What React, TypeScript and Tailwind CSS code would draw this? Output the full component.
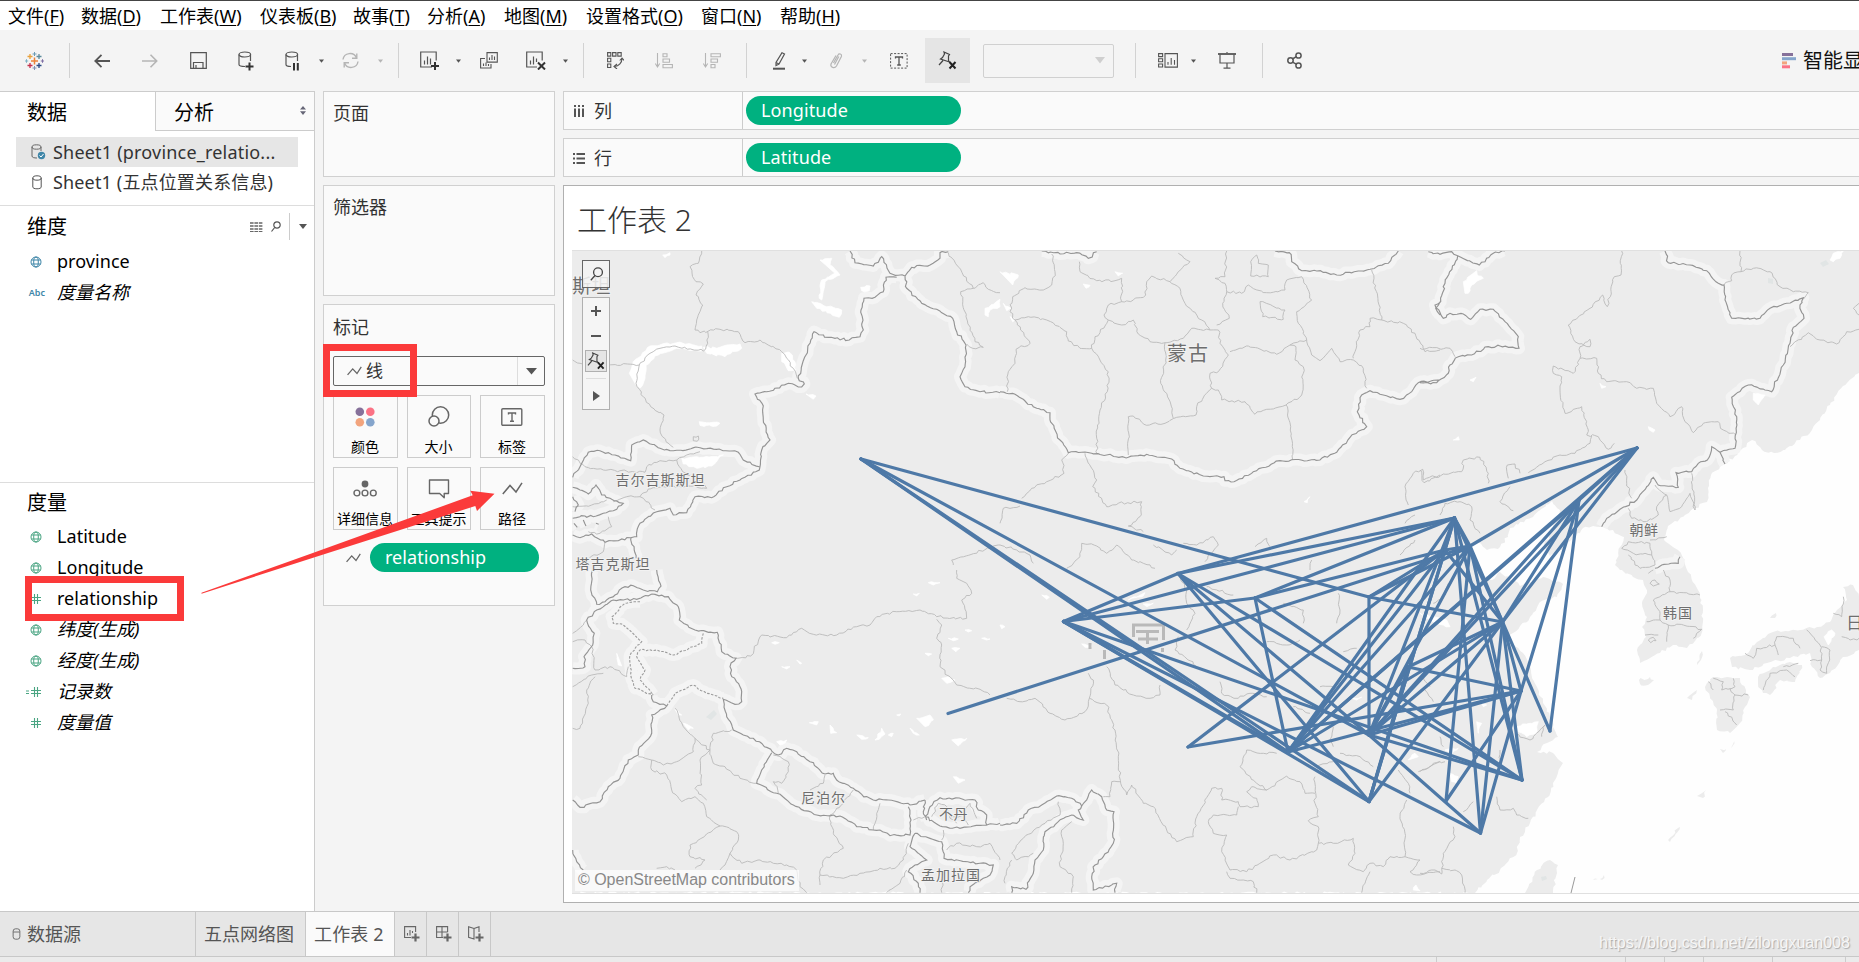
import React from 'react';

/* ---------- map geometry ---------- */

type Tile = { x: number; y: number; bold?: string[]; thin?: string[]; dash?: string[]; water?: string[]; land?: string[] };

const tiles: Tile[] = [
  {
    x: 560, y: 240,
    bold: [
      '870,33 885,68 940,78 965,50 990,100 1035,108 1055,82 1110,75 1140,55 1140,38 1165,35',
      '1010,112 978,112 970,155 945,172 912,175 903,210 910,270 900,290 868,300 805,292 762,275 738,345 715,415 733,432 725,441 685,430 620,455 585,462 606,490 610,540 630,600 605,630 598,690 540,720 500,740 455,773 405,770 380,818 340,825 330,805 290,815 240,850 230,890 213,893 228,955',
      '1035,108 1040,145 1085,190 1130,208 1178,235 1190,275 1218,315 1215,380 1200,410 1215,440 1260,455 1320,458',
      '38,712 60,680 85,637 120,632 165,645 212,662 215,615 250,600 300,625 340,632 420,623 470,628 535,637 550,660 598,680',
      '38,742 60,750 85,762 108,735 125,765 150,775 190,790 160,812 130,820 100,830 75,828 38,835',
      '38,770 55,795 45,815', '38,885 60,893 95,882 135,907 213,893', '42,850 52,862', '70,840 78,858', '108,850 116,853',
    ],
    thin: [
      '425,33 415,70 390,80 408,125 430,132 408,165 428,195 410,240 405,270 420,278 480,268 535,275 555,308 600,300 665,335 700,385 712,415',
      '38,360 60,370 238,375 270,340 300,325 345,318 430,333 443,310 443,275',
      '238,375 228,430 250,470 272,500 312,525 300,570 318,605 340,622',
      '38,650 75,680 130,690 180,692 255,697 260,680 300,662 350,660 380,645 420,635',
      '350,660 368,695 430,725 440,745 385,738 320,742 265,747 240,770 200,770 160,785',
      '240,770 285,810', '400,590 415,588 412,604 400,602 400,590',
      '1165,38 1190,75 1240,145 1270,128 1285,148 1320,158', '1240,145 1202,155 1218,230 1245,305 1270,322 1238,325 1220,312',
      '38,800 95,795 140,780', '1320,915 1175,960 1180,975', '135,907 130,935 75,960',
      '145,830 155,860 120,880 85,875',
    ],
    water: [
      '208,400 220,365 270,318 350,308 425,318 425,333 350,325 295,345 258,375 255,415 240,445 225,430',
      '430,322 470,325 500,315 540,312 545,325 495,350 440,340', '665,340 690,338 705,365 708,390 685,392 665,365',
      '365,655 430,652 490,645 455,678 410,685 370,672', '755,185 845,210 838,232 770,205', '780,60 815,55 810,75 840,105 795,125 785,180 778,175 785,120 825,100',
      '902,142 930,138 928,152 905,152', '738,462 768,468 760,478', '418,545 480,550 470,558 420,556', '1275,205 1320,178 1320,200 1290,210 1285,230 1275,225', '308,45 330,38 330,45 315,53',
    ],
  },
  {
    x: 1000, y: 240,
    bold: [
      '125,33 180,42 205,38 230,38 265,55 290,35',
      '0,455 45,463 100,500 150,518 150,540 180,600 205,638 255,636 320,645 385,652 440,643 515,657 540,685 610,708 672,710 675,722 702,725 760,695 840,662 960,660 1010,637 1050,592 1100,560 1072,515 1085,465 1110,452 1150,465 1200,478 1235,455 1255,428 1320,420',
      '825,33 868,38 875,65 905,92 950,93 1010,105 1075,93 1110,88 1165,70 1195,33', '1320,185 1307,205 1320,225',
    ],
    thin: [
      '155,42 165,95 155,135 130,150 75,143 38,170 30,215 45,240 85,230 140,240 200,275 205,303 240,325 275,325 285,290 300,278 325,240 365,255 400,240 415,282 450,305 495,308',
      '238,65 240,95 290,122 345,122 365,115 365,185 325,195 312,225 325,240', '365,185 400,180 437,165 440,125 455,108 510,125 535,95 570,65 535,40',
      '510,125 540,145 555,190 605,240 630,270 575,265 550,295 495,308 497,360 482,430 508,480 520,535',
      '45,240 90,310 48,328 45,370 25,395 22,455', '275,325 325,395 322,455 300,510 290,595 290,640',
      '385,645 385,530 400,528 432,553 495,550 530,532 588,525 590,500 635,445 630,400 655,395 685,345 660,310 655,270 630,270',
      '635,445 655,450 665,480 735,485 765,523 800,508 858,495 905,465 910,380 885,360 888,320 870,315 830,343 745,318 690,335',
      '858,495 872,560 878,660', '680,33 675,110 645,115 675,130 680,155 725,160 745,135 800,158 855,150 860,120 905,110 935,180 890,215 895,250 920,300 935,345 960,362 995,325 1020,365 1060,360 1090,385 1100,445',
      '680,155 668,190 688,235 650,255', '1115,90 1145,240 1110,235 1110,260 1080,270 1060,355', '1145,240 1210,250 1245,280 1275,335 1320,330',
      '780,185 855,210 850,238 788,230 780,185', '752,108 752,65 770,45 775,70 805,75 805,110 752,108', '870,315 920,300',
      '205,640 185,660 192,700 140,725 95,745 65,775', '255,640 290,720 278,740 320,800 355,790 425,785 420,830 385,858 430,875',
      '200,985 240,950 245,910 290,918 320,940 350,915 395,960 430,970 465,985', '550,910 590,915 640,890 655,915 615,965', '460,915 515,945 530,930',
      '0,915 50,930 90,945 100,970', '0,850 10,805 60,798', '1225,795 1215,740 1240,700 1268,688 1270,720 1320,705', '1215,850 1245,825', '1200,945 1245,900', '765,920 800,895 810,920', '930,990 935,960',
    ],
    water: ['0,95 55,105 38,135', '345,95 368,100 355,108', '250,132 270,136 258,145', '912,785 930,770 922,788', '10,190 32,205 20,212', '30,230 45,240 38,245'],
  },
  {
    x: 1420, y: 240,
    bold: [
      '25,35 60,43 95,35 113,47 178,75 220,40 255,33', '113,47 75,130 62,185 45,195 70,235 90,220 130,222 152,238 180,208 220,208 255,245 295,290 297,325 240,318 205,320 155,345 115,350 90,375 85,400 50,428 0,428',
      '735,33 745,68 810,75 860,92 895,130 912,135 915,180 935,235 1020,235 1050,205 1100,190 1150,173 1140,195 1152,235 1120,262 1110,310 1090,375 1055,455 985,435 935,472 950,530 945,625 900,637 875,620 862,660 835,670 815,695 768,698 775,742 715,735 700,712 680,740 650,780 600,808 560,835 545,860',
      '900,637 915,672', '705,985 725,975 775,970 780,950',
    ],
    thin: [
      '605,33 603,105 583,110 562,200 548,165 510,205 445,255 465,305 510,320 510,298 480,320 480,355 530,355 535,400 560,425 620,425 650,445 700,445 710,490 750,530 785,500 795,545 820,578 850,550 895,545 910,570 948,585',
      '480,355 460,400 400,378 400,400 425,410 420,450 435,520 485,500 505,570 500,585 535,590 565,628 583,610', '515,588 510,610 465,640 420,645 375,665 325,698',
      '960,33 963,95 935,105 935,122 912,135', '963,95 1000,85 1050,95 1080,140 1120,155 1165,158 1150,178', '1110,320 1165,278 1200,300 1250,312 1280,275 1317,268', '1317,190 1300,205 1317,225',
      '0,325 90,325 105,350', '0,690 12,728 70,702 125,695 130,660 180,652 205,700 205,730', '265,715 262,675 285,672 300,700', '270,740 240,785 280,812',
      '60,825 75,790 120,785 155,800 150,840 180,880', '615,690 620,730 635,775', '625,805 635,835 680,845 715,825 710,800 740,765 705,735', '740,765 750,815 785,800 810,760 825,810 815,700',
      '605,925 625,905 690,910 695,945 640,940 605,925', '625,945 660,985 705,975 695,945', '690,900 740,890',
    ],
    water: ['130,125 160,100 170,92 175,108 190,115 155,135 145,160 135,160', '150,420 168,412 160,425', '1000,460 1035,465 1015,495 1000,480', '685,560 705,570 700,577 688,570', '100,600 115,590 118,600', '1230,60 1240,40 1270,33 1260,55 1240,65', '540,430 558,440 545,445'],
  },
  {
    x: 560, y: 570,
    bold: [
      '98,0 92,60 110,103 135,95 165,75 195,50 220,47 250,60 292,65 303,48 290,0',
      '275,72 325,80 355,110 358,150 405,180 472,187 485,245 528,265 510,290 515,320 540,350 545,395 525,403 490,388 500,440 520,480 550,495 580,505 655,555 680,535 710,545 750,575 795,612 820,610 830,630 880,655 905,673 940,690 985,690 1050,705 1095,690',
      '275,72 230,88 160,90 110,120 80,150 103,190 98,225 72,260 75,290 38,295',
      '275,375 280,395 320,408 275,435 275,490 235,540 235,555 205,570 180,625 145,650 120,695 60,712 38,690',
      '635,548 605,600 590,640 650,670 700,705 770,735 840,738 890,770 960,780 990,797 1050,795 1053,750 1045,710',
      '1095,690 1090,725 1100,750', '1095,740 1110,710 1140,683 1245,690 1255,720 1280,735 1280,765 1320,760', '1095,740 1140,768 1200,775 1280,765',
      '38,840 50,875 70,900', '1065,790 1090,800 1145,815 1152,865 1260,880 1300,885 1290,915 1230,950 1225,968', '1065,790 1050,830 1100,870 1065,885 1045,905 1075,940 1080,968',
    ],
    dash: ['240,95 195,100 155,140 160,160 185,162 245,215 210,255 213,320 225,355 280,375', '430,190 425,220 400,230 340,255 290,240 240,240 230,260 255,300 240,330 280,375', '320,408 345,370 400,345 440,370 490,385'],
    thin: [
      '528,265 572,258 605,195 680,203 725,175 760,193 830,195 890,170 930,165 950,140 1010,125 1080,120 1130,140 1220,145 1205,90 1235,70 1220,40 1190,25 1190,0',
      '1130,148 1145,165 1130,205 1145,225 1140,290 1190,345 1260,358 1290,375', '38,190 70,165 80,150', '38,215 75,210 95,230 105,300 150,290 200,320 205,290', '38,350 95,315 130,310', '105,320 80,360 85,400 60,475 38,475',
      '345,415 370,470 405,505 400,545 350,575 310,585 275,570 235,560', '405,505 450,540 460,490 515,480', '275,570 275,600 320,615 335,660 365,695 405,680 430,700 440,740 480,768 530,785 535,810 510,850 495,885 480,900',
      '450,540 420,570 425,645 405,655 440,690', '450,540 460,580 495,590 540,625 590,640', '480,768 390,825 390,860 435,870 405,895', '640,555 685,575 685,605 665,640 640,635 655,670', '795,615 790,640 750,660', '880,660 850,700 810,735 820,790 850,835 790,870 780,915 780,945',
      '960,700 945,760 940,780', '510,850 545,880 600,870 640,880 680,885 710,900 720,950 740,968', '780,915 850,925 900,910 960,895 1005,895 1030,870 1045,820', '290,895 320,890 345,900', '1160,840 1190,820 1250,830 1290,820 1320,870', '1115,740 1135,700 1160,710 1170,745 1190,760', '1170,745 1210,735 1225,765', '1210,735 1230,700 1250,745', '1060,750 1095,740', '980,968 1020,940 1040,900', '1150,780 1145,810', '1150,900 1145,968',
    ],
    water: ['748,458 775,455 770,465', '810,465 830,488 812,490', '890,495 925,503 905,508', '945,510 965,475 975,492 958,508', '1070,445 1110,435 1120,450 1095,470', '1050,475 1078,495 1060,490', '1175,510 1220,505 1195,528', '650,515 680,510 660,525', '1105,38 1140,38 1120,45', '1060,72 1078,70 1070,78', '635,218 658,218 645,223', '665,290 690,290 680,297', '710,270 725,280 720,282', '1175,235 1200,235 1188,245', '1215,180 1235,182 1225,186', '1145,325 1165,320 1185,330 1160,340', '1180,620 1215,630 1195,640', '170,250 175,285 185,288', '370,460 400,475 385,480', '345,418 365,435 355,435', '1165,205 1195,207 1180,212', '985,495 1000,490 995,500', '1095,250 1115,252 1105,257', '1010,435 1022,432 1018,438', '1265,205 1290,207 1280,210'],
  },
  {
    x: 1000, y: 570,
    bold: [
      '0,765 50,760 85,720 125,705 170,678 215,685 245,708 260,690 275,660 305,680 320,720 342,725 340,820 310,860 285,885 275,920 280,960 350,940 345,968',
      '245,708 235,720 250,750 215,735 175,755 135,785 130,840 105,870 100,910 78,958 35,950 35,968',
    ],
    thin: [
      '320,290 345,345 400,375 450,385 480,375 480,345', '265,310 280,330 268,385 320,405 345,480 355,560 362,640 380,675 395,645 430,700 460,710 500,780 530,815 580,800 590,740 635,655 665,655 665,690 715,695 720,710 775,710 770,685 740,665 755,650 800,660 860,618 900,635 915,670 945,670',
      '20,385 60,395 105,385 150,430 195,450 255,425 268,385', '360,635 335,635 330,680 310,680', '740,540 720,590 770,640 800,660', '740,540 790,550 830,550', '715,710 710,735 640,735 625,755 640,790 680,795 665,845 690,900 740,905 820,855 870,870 950,840 955,820 1000,820 1060,805 1065,850 1045,885 1090,905 1110,880 1150,890 1170,860 1215,860 1260,870 1230,905 1250,915 1320,905',
      '680,905 690,925 760,935 770,968', '945,620 945,700 955,740 925,752 955,770 955,820', '1110,905 1085,968', '1220,690 1200,740 1215,790 1215,860', '540,20 560,60 560,100 585,130 560,180', '535,200 525,240 590,290', '660,335 665,370 715,385 750,370 800,380', '1015,70 1020,120 1010,160', '1020,550 1080,560 1120,590', '880,410 930,430', '1030,245 1070,235', '960,350 1000,350 1005,370', '620,50 700,75', '850,100 910,120 910,160', '800,215 860,225 900,210', '215,755 185,780 190,820 180,890 220,920 215,968', '175,695 180,735 135,760 70,805 35,850 50,870 100,850', '35,870 15,920 15,940', '1000,470 990,510 1000,530', '950,590 1000,575', '1195,600 1225,640 1230,670', '1270,320 1290,350', '1255,605 1320,575',
    ],
    water: ['125,75 148,82 140,88', '385,90 435,68 430,78 395,85', '430,102 460,100 440,110', '245,222 275,228 255,232', '0,165 15,170 5,176', '1225,570 1245,550 1255,560', '1240,960 1248,945 1260,962', '1055,385 1085,382 1070,390'],
  },
  {
    x: 1420, y: 570,
    thin: [
      '0,910 45,900 65,912 65,895 105,900 125,915 135,968', '65,895 70,850 105,800 100,770', '230,680 240,720 280,715 290,735 325,745', '130,725 160,695', '0,605 40,580 75,575', '285,490 330,510 375,465 365,500', '60,500 70,530', '15,360 40,395', '240,540 240,580', '40,100 70,80 85,40',
      '730,0 750,30 750,65 840,75', '750,65 700,90 720,130 720,150 680,155', '720,150 745,165 740,215', '745,165 790,165 845,178 820,205', '675,195 715,195', '975,250 1000,265 1010,235 1065,225 1075,255', '1065,225 1070,200 1120,205 1140,235', '1160,180 1200,225 1205,270 1170,272', '1205,230 1230,240 1220,310 1200,300 1205,270', '1270,80 1265,140 1240,130', '1030,360 1050,310 1100,300 1125,320', '1090,290 1135,280', '865,335 880,360', '880,325 910,335 905,360 945,350 940,325', '930,355 945,375 985,375', '945,375 940,420 900,420', '915,425 950,465',
      '1265,200 1290,210 1317,205', '685,10 700,0', '690,40 705,30 718,42 700,48 690,40', '685,210 700,202 708,212 692,218 685,210',
    ],
    water: ['0,130 40,140 80,150 90,170 70,165 30,150', '290,470 330,460 355,455 350,490 320,500 295,485', '90,610 115,620 110,640 95,635', '170,455 185,460 175,490', '75,540 115,535 95,550', '185,400 200,405 190,410', '1212,200 1235,180 1245,190 1225,225'],
  },
];

const landShapes: string[] = [
  // mainland with the Korean peninsula
  '572,250 1859,250 1859,373 1843,386 1830,405 1820,420 1812,430 1800,440 1785,450 1774,453 1762,450 1752,440 1743,448 1735,456 1725,464 1711,475 1708,488 1707,502 1695,508 1685,515 1668,526 1664,540 1678,550 1684,560 1688,572 1698,590 1703,610 1702,632 1695,641 1687,648 1673,645 1660,653 1650,658 1640,663 1637,650 1646,637 1642,627 1647,617 1642,603 1647,593 1643,580 1633,577 1620,570 1615,565 1620,547 1624,537 1613,530 1600,527 1583,528 1575,536 1562,550 1550,556 1544,548 1552,530 1560,510 1552,501 1533,517 1510,528 1508,537 1500,547 1487,550 1478,542 1470,545 1475,560 1480,575 1492,580 1500,572 1520,586 1543,577 1563,584 1557,597 1540,602 1530,617 1513,633 1508,637 1523,653 1537,687 1543,703 1550,717 1553,727 1558,737 1547,743 1537,752 1553,753 1563,763 1558,773 1553,783 1548,797 1537,810 1530,823 1520,837 1517,853 1500,870 1487,880 1475,893 572,893',
  // Kyushu, Shikoku, Honshu, Taiwan
  '1707,683 1713,677 1727,677 1740,678 1742,685 1750,697 1745,707 1740,723 1730,733 1717,730 1717,710 1710,697 1705,687',
  '1758,677 1773,667 1790,662 1802,665 1795,682 1780,680 1770,695 1763,693 1758,683',
  '1730,658 1745,655 1757,642 1773,632 1800,630 1817,627 1830,622 1837,610 1847,600 1843,587 1853,585 1859,597 1859,650 1843,657 1830,673 1820,678 1812,667 1810,653 1790,658 1767,663 1750,670 1732,667',
  '1525,893 1537,870 1550,860 1558,865 1553,893',
  '1639,680 1650,677 1654,680 1648,685 1640,684', '1697,665 1702,651 1701,660', '1687,698 1697,690 1692,700', '1697,796 1706,790 1703,798', '1668,840 1680,827 1670,842', '1720,749 1726,749 1723,753', '1731,748 1734,740 1732,747', '1770,618 1776,613 1775,618', '1593,880 1598,879', '1600,879 1604,875 1602,880',
];

const rand = (n: number) => {
  const s = Math.sin(n * 127.1) * 43758.5453;
  return s - Math.floor(s) - 0.5;
};

function rough(points: string, ox: number, oy: number, k: number, amp: number, close = false): string {
  const p = points.split(' ').map((s) => {
    const [a, b] = s.split(',').map(Number);
    return [ox + a * k, oy + b * k];
  });
  let d = `M${p[0][0].toFixed(1)} ${p[0][1].toFixed(1)}`;
  for (let i = 1; i < p.length; i++) {
    const [x0, y0] = p[i - 1];
    const [x1, y1] = p[i];
    const len = Math.hypot(x1 - x0, y1 - y0);
    const n = Math.max(1, Math.round(len / 3.2));
    const border = (x0 < 573 && x1 < 573) || (x0 > 1858 && x1 > 1858) || (y0 < 251 && y1 < 251);
    for (let j = 1; j <= n; j++) {
      const t = j / n;
      const a = j === n || border ? 0 : amp;
      const x = x0 + (x1 - x0) * t + rand(x0 + j * 3.7 + y1) * a;
      const y = y0 + (y1 - y0) * t + rand(y0 + j * 5.3 + x1) * a;
      d += `L${x.toFixed(1)} ${y.toFixed(1)}`;
    }
  }
  return close ? d + 'Z' : d;
}

const layer = (key: 'bold' | 'thin' | 'dash' | 'water', amp: number, close = false) =>
  tiles.flatMap((t) => (t[key] ?? []).map((s) => rough(s, t.x, t.y, 1 / 3, amp, close))).join('');

const landPath = landShapes.map((s) => rough(s, 0, 0, 1, 3, true)).join('');
const boldPath = layer('bold', 2.2);
const thinPath = layer('thin', 2.4);
const dashPath = layer('dash', 1.5);
const waterPath = layer('water', 2.2, true);

const cities: Record<string, [number, number]> = {
  A: [861, 459], B: [1063.5, 621.5], C: [948, 713.5], D: [1188, 747], E: [1178, 573.5], F: [1255, 598], G: [1288, 752],
  H: [1369, 597], I: [1369, 735], J: [1369, 801.5], K: [1454.5, 518], L: [1445, 550], M: [1470, 546], N: [1637, 448],
  O: [1579, 500], P: [1502.5, 622], Q: [1521, 691], R: [1550, 731], S: [1522, 780], T: [1446, 801], U: [1480.5, 833], V: [1408, 667],
};

const links =
  'AH HP AI AG AJ BE BF BK BG BJ BU BS CM DQ DL EN EK EJ EI ES FK FL FG FS HI HL HM GK GL GM GO GN GP GQ IV IO IN IQ IP IK IM IU IS JV JL JP JK NM NO OP NP OQ OR PQ PR PS PU PV VQ QT QU KU KS MT MS MP KP KL KM LM LP'.split(' ');

const mapLabels: [string, number, number, number, number][] = [
  ['斯坦', 572, 293, 19, 0.5],
  ['吉尔吉斯斯坦', 615.5, 485, 14, 1],
  ['塔吉克斯坦', 575.5, 569, 14, 1],
  ['蒙古', 1167, 360.5, 20, 1],
  ['朝鲜', 1629.5, 534.5, 14, 0.5],
  ['韩国', 1663, 618, 14, 1],
  ['日本', 1846, 629, 17, 1],
  ['尼泊尔', 801, 803, 14, 1],
  ['不丹', 939, 819, 14, 0.5],
  ['孟加拉国', 921, 880, 14, 1],
];

function MapView() {
  return (
    <svg viewBox="572 251 1287 642" className="block h-full w-full">
      <rect x="572" y="251" width="1287" height="642" fill="#fefefe" />
      <path d={landPath} fill="#ececec" />
      <path d={boldPath + dashPath} fill="none" stroke="#f4f4f4" strokeWidth="12" strokeLinejoin="round" />
      <path d={waterPath} fill="#fff" stroke="#fff" strokeWidth="0.8" />
      <path d={thinPath} fill="none" stroke="#bababa" strokeWidth="0.9" />
      <path d={dashPath} fill="none" stroke="#9b9b9b" strokeWidth="1.1" strokeDasharray="2.5 1.5" />
      <path d={boldPath} fill="none" stroke="#949494" strokeWidth="1.15" />
      <path d="M1575 877l-4 16" stroke="#999" fill="none" />
      <g fill="#e1e5e5">
        <path d="M706 717l8-7 3 4-6 6zM1820 263l6-3 3 4-6 3zM1768 278l5 1 0 5-5-1zM1541 877l5-1 1 3-5 2z" />
      </g>
      <g fill="none" stroke="#b9b9b9" strokeWidth="3">
        <path d="M1133.500 637v-12h30v15M1136 631.500h23M1138 639h20M1147.500 632v12M1090 643v6M1104.500 650v9M1162.500 648v4" />
      </g>
      {mapLabels.map(([t, x, y, s, ls]) => (
        <text key={t} x={x} y={y} fontSize={s} letterSpacing={ls} fill="#6e6e6e" stroke="#f2f2f2" strokeWidth="2" paintOrder="stroke" fontFamily="'Noto Sans CJK SC', sans-serif">
          {t}
        </text>
      ))}
      <g stroke="#4e79a7" strokeWidth="3.2" strokeLinecap="round">
        {links.map((l) => {
          const [a, b] = [cities[l[0]], cities[l[1]]];
          return <line key={l} x1={a[0]} y1={a[1]} x2={b[0]} y2={b[1]} />;
        })}
      </g>
    </svg>
  );
}

/* ---------- icons ---------- */

type SvgProps = { w: number; h: number; c?: string; sw?: number; children: React.ReactNode; className?: string };
const Svg = ({ w, h, c = '#555', sw = 1.2, children, className = '' }: SvgProps) => (
  <svg width={w} height={h} viewBox={`0 0 ${w} ${h}`} fill="none" stroke={c} strokeWidth={sw} className={`block shrink-0 ${className}`}>
    {children}
  </svg>
);

const Caret = ({ light = false }: { light?: boolean }) => (
  <Svg w={5} h={4} c="none"><path d="M0 .5h5L2.500 3.800z" fill={light ? '#b5b5b5' : '#555'} /></Svg>
);
const Globe = ({ c }: { c: string }) => (
  <Svg w={12} h={12} c={c} sw={1}><circle cx="6" cy="6" r="5" /><ellipse cx="6" cy="6" rx="2.300" ry="5" /><path d="M1.500 4h9M1.500 8h9" /></Svg>
);
const Hash = () => (
  <Svg w={12} h={12} c="#4aa583" sw={1.1}><path d="M1 4.500h10M1 7.500h10M4.500 1v10M7.500 1v10" /></Svg>
);
const Cylinder = ({ c = '#555' }: { c?: string }) => (
  <Svg w={10} h={15} c={c} sw={1}><path d="M.8 3v9c0 1 1.500 1.800 4.200 1.800s4.200-.8 4.200-1.800V3" /><ellipse cx="5" cy="3" rx="4.200" ry="2.200" /></Svg>
);
const Pin = ({ s = 19 }: { s?: number }) => (
  <svg width={s} height={s} viewBox="0 0 19 19" fill="none" stroke="#444" strokeWidth="1.200" className="block">
    <path d="M6 1l5.500 2.500-1 1.500 0 4.500 1 1.500-9-3 2-1.500L6.500 3zM5 9.500L1 14" />
    <path d="M11.500 11l6 6.500M17.500 11l-6 6.500" stroke="#222" strokeWidth="2" />
  </svg>
);
const LineMark = ({ big = false }: { big?: boolean }) => (
  <svg width={big ? 21 : 15} height={big ? 13 : 10} viewBox="0 0 21 13" fill="none" stroke="#666" strokeWidth={big ? 1.5 : 1.8} className="block shrink-0">
    <path d="M.8 12L8 3.500l6 6.500L20 .8" />
  </svg>
);
const Sep = ({ className }: { className: string }) => <div className={`h-[35px] w-px shrink-0 bg-[#d2d2d2] ${className}`} />;

/* ---------- toolbar ---------- */

function Toolbar() {
  return (
    <div className="flex h-[61px] shrink-0 items-center overflow-hidden bg-[#f4f4f4]">
      <Svg w={19} h={18} sw={1.3} className="ml-[25px]">
        <path d="M9.500 5.500v7M6 9h7" stroke="#eb8339" strokeWidth="1.500" />
        <path d="M9.500 0v4M7.500 2h4" stroke="#6a9bb5" strokeWidth="1" />
        <path d="M9.500 14v4M7.500 16h4" stroke="#7f91b4" strokeWidth="1" />
        <path d="M5 2v5M2.500 4.500h5" stroke="#e8a13c" /><path d="M14 2v5M11.500 4.500h5" stroke="#5b8a9c" />
        <path d="M5 11v5M2.500 13.500h5" stroke="#c4304c" /><path d="M14 11v5M11.500 13.500h5" stroke="#2b4b85" />
        <path d="M1.500 7.200v3.600M0 9h3.200" stroke="#7fb2c5" strokeWidth="1" /><path d="M17.500 7.200v3.600M15.800 9h3.200" stroke="#7f6fa5" strokeWidth="1" />
      </Svg>
      <Sep className="ml-[25px]" />
      <Svg w={16} h={14} sw={1.8} className="ml-[24px]"><path d="M16 7H1.500M7.500 .8L1.300 7l6.200 6.200" /></Svg>
      <Svg w={16} h={14} sw={1.6} c="#b5b5b5" className="ml-[32px]"><path d="M0 7h14.500M8.500 .8L14.700 7l-6.200 6.200" /></Svg>
      <Svg w={17} h={17} className="ml-[32px]"><path d="M.7 .7h15.600v15.600H.7zM3.500 16v-5.500h9.500V16M6 16v-3" /></Svg>
      <Svg w={16} h={20} className="ml-[31px]"><path d="M7 15.500C3 15.500 1 14.800 1 13.500V3.500M12.500 3.500V10" /><ellipse cx="6.800" cy="3.500" rx="5.800" ry="2.500" /><path d="M11.500 11.500v8M7.500 15.500h8" stroke="#333" strokeWidth="2" /></Svg>
      <Svg w={16} h={20} className="ml-[31px]"><path d="M6 15.500C3 15.500 1 14.800 1 13.500V3.500M12.500 3.500V10" /><ellipse cx="6.800" cy="3.500" rx="5.800" ry="2.500" /><path d="M9 12v7.500M12.800 12v7.500" stroke="#333" strokeWidth="2" /></Svg>
      <div className="ml-[18px]"><Caret /></div>
      <Svg w={19} h={17} c="#b5b5b5" sw={1.4} className="ml-[17px]"><path d="M2 7.500A7 6.800 0 0 1 15.500 6M17 9.500A7 6.800 0 0 1 3.500 11M15.800 1.500V6.300H11M3.200 15.500v-4.800H8" /></Svg>
      <div className="ml-[18px]"><Caret light /></div>
      <Sep className="ml-[15px]" />
      <Svg w={20} h={19} className="ml-[21px]"><path d="M12 16H.7V1h15.500v8.500M4.500 13.500V9.500M7.500 13.500V5.500M10.500 13.500V7.500" /><path d="M15 11v8M11 15h8" stroke="#333" strokeWidth="2" /></Svg>
      <div className="ml-[16px]"><Caret /></div>
      <Svg w={18} h={17} sw={1.1} className="ml-[19px]"><path d="M7 .6h10.300v9.500H7zM9.500 8V5.500M12 8V3M14.500 8V4.500M5 6.500H.6v9.500H11v-4M3.500 14v-2.500M6 14v-3.500M8.500 14v-2" /></Svg>
      <Svg w={20} h={19} className="ml-[28px]"><path d="M11 16H.7V1h15.500v8.500M4.500 13.500V9.500M7.500 13.500V5.500M10.500 11V7.500" /><path d="M12 11.500l7 7M19 11.500l-7 7" stroke="#333" strokeWidth="2" /></Svg>
      <div className="ml-[17px]"><Caret /></div>
      <Sep className="ml-[15px]" />
      <Svg w={17} h={17} sw={1.1} className="ml-[23px]"><path d="M.6 .6h3.200v3.500H.6zM5.600 .6h3.400v3.500H5.600zM10.800 .6h3.400v3.500h-3.400zM.6 6.300h3.200v3.500H.6zM.6 12h3.200v3.500H.6zM15 6.500c0 4-3 7.500-7.500 8M12.800 8.500L15 6l2 2.500M10 12l-3 2.500 3 2.500" /></Svg>
      <Svg w={18} h={16} c="#b5b5b5" sw={1.1} className="ml-[31px]"><path d="M2.500 0v13M.3 10.500L2.500 14l2.200-3.500M8 .8h4v3H8zM8 6h6.500v3.200H8zM8 11.500h9.400v3.300H8z" /></Svg>
      <Svg w={18} h={16} c="#b5b5b5" sw={1.1} className="ml-[30px]"><path d="M2.500 0v13M.3 10.500L2.500 14l2.200-3.500M8 .8h9.400v3H8zM8 6h6.500v3.200H8zM8 11.500h4v3.300H8z" /></Svg>
      <Sep className="ml-[25px]" />
      <Svg w={14} h={18} className="ml-[25px]"><path d="M10 .7l2.500 1.300-5.500 10-3 1.500 0-3zM4 10.500l3 1.500" /><path d="M1 16.700h12" strokeWidth="2" /></Svg>
      <div className="ml-[16px]"><Caret /></div>
      <Svg w={14} h={17} c="#b5b5b5" className="ml-[22px]"><path d="M4.500 11l4.500-8c1-2 4-1 3.500 1.200L7.500 14c-2 3-6.500 1.500-5.500-2L7 3.500M9.800 4.500L5.500 12.500" /></Svg>
      <div className="ml-[19px]"><Caret light /></div>
      <Svg w={18} h={16} sw={1} className="ml-[23px]"><path d="M.6 .6h16.500v14.500H.6z" strokeDasharray="2 1.500" /><path d="M5.500 5.500V4h7v1.500M9 4v8M7.200 12h3.600" strokeWidth="1.300" /></Svg>
      <div className="ml-[17px] flex h-[45px] w-[45px] shrink-0 items-center justify-center bg-[#e5e5e5]"><Pin /></div>
      <div className="ml-[13px] flex h-[34px] w-[131px] shrink-0 items-center justify-end rounded-[2px] border border-[#d0d0d0] pr-[8px]">
        <Svg w={10} h={7} c="none"><path d="M0 0h10L5 6.500z" fill="#cfcfcf" /></Svg>
      </div>
      <Sep className="ml-[21px]" />
      <Svg w={20} h={15} sw={1.1} className="ml-[22px]"><path d="M.6 .6h4v3h-4zM.6 5.800h4v3h-4zM.6 11h4v3h-4zM7 .6h12.400v13.500H7zM10 11.800V9M13.200 11.800V5M16.500 11.800V7" /></Svg>
      <div className="ml-[13px]"><Caret /></div>
      <Svg w={18} h={17} className="ml-[22px]"><path d="M0 2h18" strokeWidth="1.800" /><path d="M9 0v1M2 2.500v8.500h14V2.500M9 11v5M5.500 16.200h7" /></Svg>
      <Sep className="ml-[26px]" />
      <Svg w={15} h={17} sw={1.5} className="ml-[24px]"><circle cx="3.500" cy="8.500" r="2.700" /><circle cx="11.500" cy="3.500" r="2.600" /><circle cx="11.500" cy="13.500" r="2.600" /><path d="M5.500 7l3.800-2.300M5.500 10.200l3.800 2" /></Svg>
      <Svg w={14} h={16} c="none" className="ml-[480px]"><path d="M0 0h11v3H0z" fill="#86719a" /><path d="M0 4.200h14v3H0z" fill="#85a5cc" /><path d="M0 8.400h5v3H0z" fill="#f2a47d" /><path d="M0 12.300h8v3H0z" fill="#fb7285" /></Svg>
      <div className="ml-[7px] shrink-0 pt-[1px] text-[20px] whitespace-nowrap text-[#111]">智能显示</div>
    </div>
  );
}

/* ---------- menu ---------- */

function MenuBar() {
  const cls = 'shrink-0 whitespace-nowrap';
  const item = (t: string, k: string, w: string) => (
    <div className={`${cls} ${w}`}>{t}(<span className="underline underline-offset-2">{k}</span>)</div>
  );
  return (
    <div className="flex h-[30px] shrink-0 items-center border-t border-[#444] bg-white pt-[2px] pl-[8px] text-[18px] text-black">
      {item('文件', 'F', 'w-[73px]')}
      {item('数据', 'D', 'w-[79px]')}
      {item('工作表', 'W', 'w-[100px]')}
      {item('仪表板', 'B', 'w-[93px]')}
      {item('故事', 'T', 'w-[74px]')}
      {item('分析', 'A', 'w-[77px]')}
      {item('地图', 'M', 'w-[82px]')}
      {item('设置格式', 'O', 'w-[115px]')}
      {item('窗口', 'N', 'w-[79px]')}
      {item('帮助', 'H', 'w-[80px]')}
    </div>
  );
}

/* ---------- data pane ---------- */

function Field({ icon, text, italic = false }: { icon: React.ReactNode; text: string; italic?: boolean }) {
  return (
    <div className="flex h-[31px] items-center">
      <div className="flex w-[57px] justify-end pr-[15px]">{icon}</div>
      <div className={`text-[18px] whitespace-nowrap ${italic ? 'italic' : 'tracking-[0.05px]'}`}>{text}</div>
    </div>
  );
}

function DataPane() {
  const green = '#4aa583';
  return (
    <div className="flex w-[315px] shrink-0 flex-col border-t border-r border-[#ccc] bg-white text-black">
      <div className="flex h-[39px] shrink-0 text-[20px]">
        <div className="flex w-[155px] items-center pt-[3px] pl-[27px]">数据</div>
        <div className="flex flex-1 items-center border-b border-l border-[#ccc] bg-[#fafafa] pt-[3px] pl-[18px]">
          分析
          <Svg w={6} h={9} c="none" className="mr-[8px] mb-[4px] ml-auto"><path d="M0 3.500h6L3 0zM0 5.300h6L3 9z" fill="#667" /></Svg>
        </div>
      </div>
      <div className="flex h-[75px] shrink-0 flex-col border-b border-[#ddd] pt-[6px] text-[18px] text-[#333]">
        <div className="mr-[16px] ml-[16px] flex h-[30px] items-center bg-[#e6e6e6] pl-[15px]">
          <svg width="15" height="16" viewBox="0 0 15 16" fill="none" stroke="#666" className="mr-[7px] shrink-0">
            <path d="M10 7V3M6 14C3 14 1 13.500 1 12V3" /><ellipse cx="5.500" cy="3" rx="4.500" ry="2.200" />
            <circle cx="10.500" cy="11.500" r="3.700" fill="#3f86a8" stroke="none" /><path d="M8.500 11.500l1.500 1.500 2.500-3" stroke="#fff" />
          </svg>
          <span className="tracking-[0.2px] whitespace-nowrap">Sheet1 (province_relatio...</span>
        </div>
        <div className="flex h-[30px] items-center pl-[32px]">
          <Cylinder />
          <span className="ml-[11px] tracking-[0.15px] whitespace-nowrap">Sheet1 (五点位置关系信息)</span>
        </div>
      </div>
      <div className="flex h-[277px] shrink-0 flex-col border-b border-[#ddd]">
        <div className="flex h-[40px] items-center pt-[1px] pl-[27px] text-[20px]">
          维度
          <div className="mr-[7px] ml-auto flex items-center">
            <Svg w={13} h={10} c="#666" sw={1.4}><path d="M0 1h13M0 4h13M0 7h13M0 9.600h13" strokeDasharray="3.600 .8" /></Svg>
            <Svg w={10} h={11} className="ml-[8px]"><circle cx="6" cy="4" r="3.200" /><path d="M3.700 6.500L.5 10.500" /></Svg>
            <div className="ml-[8px] h-[27px] w-px bg-[#ccc]" />
            <Svg w={8} h={5} c="none" className="ml-[9px]"><path d="M0 0h8L4 5z" fill="#555" /></Svg>
          </div>
        </div>
        <Field icon={<Globe c="#3f86a8" />} text="province" />
        <Field icon={<span className="mr-[-3px] text-[9px] font-semibold text-[#3f86a8]">Abc</span>} text="度量名称" italic />
      </div>
      <div className="flex h-[38px] items-center pt-[1px] pl-[27px] text-[20px]">度量</div>
      <Field icon={<Globe c={green} />} text="Latitude" />
      <Field icon={<Globe c={green} />} text="Longitude" />
      <Field icon={<Hash />} text="relationship" />
      <Field icon={<Globe c={green} />} text="纬度(生成)" italic />
      <Field icon={<Globe c={green} />} text="经度(生成)" italic />
      <Field icon={<><Svg w={4} h={12} c={green} sw={1}><path d="M0 5h3M0 7.500h3" /></Svg><Hash /></>} text="记录数" italic />
      <Field icon={<Hash />} text="度量值" italic />
    </div>
  );
}

/* ---------- cards ---------- */

function MarkButton({ label, children }: { label: string; children: React.ReactNode }) {
  return (
    <div className="flex h-[63px] flex-col items-center border border-[#ccc] bg-[#fafafa] pr-[1px] text-[14px] text-black">
      <div className="flex h-[41px] items-center">{children}</div>
      <div className="leading-[20px] whitespace-nowrap">{label}</div>
    </div>
  );
}

function Cards() {
  const card = 'border border-[#d0d0d0] bg-[#fafafa] pl-[9px] text-[18px] text-[#333]';
  return (
    <div className="ml-[8px] flex w-[232px] shrink-0 flex-col gap-[8px]">
      <div className={`h-[86px] pt-[8px] ${card}`}>页面</div>
      <div className={`h-[111px] pt-[8px] ${card}`}>筛选器</div>
      <div className={`h-[302px] ${card}`}>
        <div className="mt-[9px] h-[26px]">标记</div>
        <div className="mt-[16px] flex h-[30px] w-[212px] items-center rounded-[2px] border border-[#666] pl-[13px]">
          <LineMark />
          <span className="ml-[4px] text-[17px]">线</span>
          <div className="ml-auto flex h-full w-[27px] items-center justify-center border-l border-[#ddd]">
            <Svg w={11} h={7} c="none"><path d="M0 0h11L5.500 6.500z" fill="#555" /></Svg>
          </div>
        </div>
        <div className="mt-[9px] grid w-[212px] grid-cols-[65px_64px_65px] gap-x-[9px] gap-y-[9px]">
          <MarkButton label="颜色">
            <Svg w={20} h={20} c="none"><circle cx="4.800" cy="4.800" r="4.300" fill="#86719a" /><circle cx="15.300" cy="4.800" r="4.300" fill="#fb7285" /><circle cx="4.800" cy="15.300" r="4.300" fill="#f2a47d" /><circle cx="15.300" cy="15.300" r="4.300" fill="#85a5cc" /></Svg>
          </MarkButton>
          <MarkButton label="大小">
            <Svg w={22} h={21} c="#666" sw={1.5}><circle cx="12.500" cy="9" r="8.200" /><circle cx="6" cy="15" r="5" fill="#fafafa" /></Svg>
          </MarkButton>
          <MarkButton label="标签">
            <Svg w={22} h={18} c="#666" sw={1.4}><rect x=".8" y=".8" width="20" height="16.400" rx="1" /><path d="M7.500 6.500V5h7v1.500M11 5v8M9 13.200h4" /></Svg>
          </MarkButton>
          <MarkButton label="详细信息">
            <Svg w={24} h={17} c="#666" sw={1.4}><circle cx="12" cy="4" r="3.400" fill="#666" stroke="none" /><circle cx="3.900" cy="13" r="2.900" /><circle cx="12" cy="13" r="2.900" /><circle cx="20.300" cy="13" r="2.900" /></Svg>
          </MarkButton>
          <MarkButton label="工具提示">
            <Svg w={22} h={20} c="#666" sw={1.4}><path d="M1.500 1h19v13.500h-4.300v4.200l-4.500-4.200H1.500z" strokeLinejoin="round" /></Svg>
          </MarkButton>
          <MarkButton label="路径"><LineMark big /></MarkButton>
        </div>
        <div className="mt-[13px] flex h-[29px] items-center pl-[13px]">
          <LineMark />
          <div className="ml-[9px] flex h-[29px] w-[169px] items-center rounded-full bg-[#00b180] pl-[15px] tracking-[0.05px] text-white">relationship</div>
        </div>
      </div>
    </div>
  );
}

/* ---------- shelves and sheet ---------- */

function Shelf({ icon, label, pill }: { icon: React.ReactNode; label: string; pill: string }) {
  return (
    <div className="flex h-[39px] shrink-0 items-stretch border border-r-0 border-[#d0d0d0] bg-[#fafafa] text-[18px]">
      <div className="flex w-[179px] items-center border-r border-[#ccc] pt-[1px] pl-[9px] text-[#333]">
        <div className="w-[21px]">{icon}</div>
        {label}
      </div>
      <div className="mt-[4px] ml-[3px] flex h-[29px] w-[215px] items-center rounded-full bg-[#00b180] pl-[15px] tracking-[0.1px] text-white">{pill}</div>
    </div>
  );
}

function Sheet() {
  return (
    <div className="flex h-[718px] shrink-0 flex-col border border-r-0 border-[#b0b0b0] bg-white pl-[8px]">
      <div className="flex h-[64px] items-center pt-[4px] pl-[5px] text-[30px] leading-none font-light text-[#333]">工作表 2</div>
      <div className="relative h-[644px] overflow-hidden border-t border-b border-[#e0e0e0]">
        <MapView />
        <div className="absolute top-[9px] left-[10px] flex w-[28px] flex-col gap-[9px]">
          <div className="flex h-[28px] items-center justify-center border border-[#666] bg-[#f5f5f5]/85">
            <Svg w={13} h={14} c="#444" sw={1.3}><circle cx="8" cy="5.300" r="4.400" /><path d="M5 8.500L.8 13.200" /></Svg>
          </div>
          <div className="flex h-[113px] flex-col items-center border border-[#b0b0b0] bg-[#f5f5f5]">
            <Svg w={10} h={10} sw={2} className="mt-[8px]"><path d="M5 0v10M0 5h10" /></Svg>
            <Svg w={10} h={2} sw={2} className="mt-[19px]"><path d="M0 1h10" /></Svg>
            <div className="mt-[13px] flex h-[22px] w-[22px] items-center justify-center border border-[#b0b0b0] bg-[#e5e5e5]"><Pin s={18} /></div>
            <div className="mt-[6px] h-px w-[20px] bg-[#ddd]" />
            <Svg w={7} h={10} c="none" className="mt-[12px]"><path d="M0 0v10l7-5z" fill="#555" /></Svg>
          </div>
        </div>
        <div className="absolute bottom-[2px] left-[3px] h-[21px] w-[224px] bg-white/70 pl-[3px] font-['Liberation_Sans',sans-serif] text-[16px] leading-[19px] tracking-[-0.02px] whitespace-nowrap text-[#888]">
          © OpenStreetMap contributors
        </div>
      </div>
    </div>
  );
}

/* ---------- bottom tabs ---------- */

function BottomTabs() {
  const tab = 'flex items-center border-r border-[#c8c8c8]';
  const plus = <path d="M11.500 7.500v8M7.500 11.500h8" strokeWidth="2.200" />;
  return (
    <>
      <div className="relative flex h-[46px] shrink-0 border-t border-b border-[#c8c8c8] bg-[#e6e6e6] text-[18px] text-[#555]">
        <div className={`w-[196px] pt-[1px] pl-[12px] ${tab}`}>
          <svg width="9" height="12" viewBox="0 0 10 15" fill="none" stroke="#555" className="mr-[6px] mb-[2px]"><rect x=".8" y="1" width="8.400" height="13" rx="3" /><path d="M1 5h8" /></svg>
          数据源
        </div>
        <div className={`w-[110px] pt-[1px] pl-[8px] ${tab}`}>五点网络图</div>
        <div className={`w-[89px] bg-[#fafafa] pt-[1px] pl-[8px] tracking-[0.15px] ${tab}`}>工作表 2</div>
        <div className={`w-[32px] pl-[9px] ${tab}`}><Svg w={16} h={16} c="#666" sw={1.1}><path d="M7 11.500H.6V.6h11V6M3.500 9.500V7M6 9.500V4M8.500 7V5" />{plus}</Svg></div>
        <div className={`w-[32px] pl-[9px] ${tab}`}><Svg w={16} h={16} c="#666" sw={1.1}><path d="M7 11.500H.6V.6h11V6M6 .6v11M.6 6h11" />{plus}</Svg></div>
        <div className={`w-[32px] pl-[9px] ${tab}`}><Svg w={16} h={16} c="#666" sw={1.1}><path d="M6 2.500L.6 .8v10.500L6 13zM6 2.500L11 .8V6" />{plus}</Svg></div>
        <div className="absolute top-[20px] left-[1599px] font-['Liberation_Sans',sans-serif] text-[16px] leading-[22px] whitespace-nowrap text-[#f6f6f6] [text-shadow:1px_1px_1px_#aaa]">
          https://blog.csdn.net/zilongxuan008
        </div>
      </div>
      <div className="flex h-[6px] shrink-0 bg-[#ebebeb]">
        <div className="w-[1437px] border-r border-[#ccc]" />
        <div className="w-[189px] border-r border-[#ccc]" />
        <div className="w-[39px] border-r border-[#ccc]" />
        <div className="w-[39px] border-r border-[#ccc]" />
        <div className="w-[69px] border-r border-[#ccc]" />
        <div className="w-[73px] border-r border-[#ccc]" />
      </div>
    </>
  );
}

export default function App() {
  return (
    <div className="relative flex h-[962px] w-[1859px] flex-col overflow-hidden bg-[#f4f4f4] font-['Noto_Sans','Noto_Sans_CJK_SC',sans-serif]">
      <MenuBar />
      <Toolbar />
      <div className="flex h-[820px] shrink-0">
        <DataPane />
        <Cards />
        <div className="ml-[8px] flex min-w-0 flex-1 flex-col gap-[8px]">
          <Shelf
            icon={<Svg w={12} h={12} sw={2}><path d="M2 0v2M6 0v2M10 0v2M2 3.500V12M6 3.500V12M10 3.500V12" /></Svg>}
            label="列"
            pill="Longitude"
          />
          <Shelf
            icon={<Svg w={12} h={11} sw={2}><path d="M0 1h2M0 5.500h2M0 10h2M3.500 1H12M3.500 5.500H12M3.500 10H12" /></Svg>}
            label="行"
            pill="Latitude"
          />
          <Sheet />
        </div>
      </div>
      <BottomTabs />

      <div className="absolute top-[576px] left-[25px] h-[45px] w-[159px] border-[7px] border-[#fb3a3a]" />
      <div className="absolute top-[344px] left-[323px] h-[53px] w-[94px] border-[7px] border-[#fb3a3a]" />
      <svg className="absolute top-[480px] left-[195px]" width="305" height="120" viewBox="195 480 305 120">
        <path d="M201.500 592.800L310 554l162.700-58.700-2.400-4.600 24.200 3L477 511l-1.700-5L310 558.700 201.500 593.800z" fill="#fb3a3a" />
      </svg>
    </div>
  );
}
